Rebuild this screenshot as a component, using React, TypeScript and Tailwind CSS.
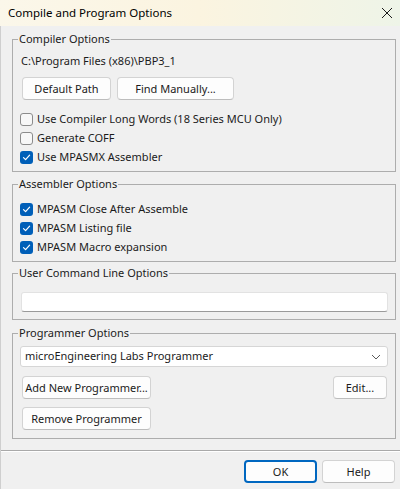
import React from 'react';

const font = { fontFamily: '"Noto Sans", sans-serif' };

function Button({ children, className = '', primary = false }: { children: React.ReactNode; className?: string; primary?: boolean }) {
  return (
    <button
      className={`h-[23px] whitespace-nowrap rounded-[4px] bg-[#fdfdfd] text-[11px] leading-none text-[#1b1b1b] ${
        primary ? 'border-2 border-[#0067c0]' : 'border border-[#d3d3d3] border-b-[#bdbdbd]'
      } ${className}`}
    >
      {children}
    </button>
  );
}

function Check({ label, checked }: { label: string; checked?: boolean }) {
  return (
    <div className="flex h-[19px] items-center">
      {checked ? (
        <span className="flex h-[13px] w-[13px] items-center justify-center rounded-[3px] bg-[#005fb8]">
          <svg width="9" height="9" viewBox="0 0 9 9" fill="none">
            <path d="M1.5 4.6 L3.6 6.7 L7.6 2.2" stroke="white" strokeWidth="1.2" strokeLinecap="round" strokeLinejoin="round" />
          </svg>
        </span>
      ) : (
        <span className="h-[13px] w-[13px] rounded-[3px] border border-[#8b8b8b] bg-[#f7f7f7]" />
      )}
      <span className="ml-[4px] text-[11px] text-[#1b1b1b]">{label}</span>
    </div>
  );
}

function Group({ title, className = '', children }: { title: string; className?: string; children: React.ReactNode }) {
  return (
    <fieldset className={`ml-[11px] mr-[4px] border border-[#adadad] px-[7px] ${className}`}>
      <legend className="-ml-[2px] px-[1px] text-[11px] leading-[16px] text-[#1b1b1b]">{title}</legend>
      {children}
    </fieldset>
  );
}

export default function App() {
  return (
    <div className="flex h-[489px] w-[400px] flex-col overflow-hidden bg-[#f0f0f0] text-[#1b1b1b]" style={font}>
      {/* Title bar */}
      <div className="flex h-[26px] shrink-0 items-center justify-between bg-linear-to-r from-[#fbf7ea] via-[#fbf4e0] to-[#eef4e8] pl-[8px] pr-[6px]">
        <span className="text-[11.5px] text-black">Compile and Program Options</span>
        <svg width="12" height="12" viewBox="0 0 12 12" className="mr-[1px]">
          <path d="M1 1 L11 11 M11 1 L1 11" stroke="#1b1b1b" strokeWidth="1" />
        </svg>
      </div>

      <div className="flex flex-1 flex-col border-l border-[#cfcfcf]">
        <Group title="Compiler Options" className="mt-[5px] pb-[4px]">
          <div className="mt-[6px] h-[16px] pl-[1px] text-[11px] leading-[16px]">C:\Program Files (x86)\PBP3_1</div>
          <div className="mt-[8px] flex gap-[6px] pl-[2px]">
            <Button className="w-[89px]">Default Path</Button>
            <Button className="w-[117px]">Find Manually...</Button>
          </div>
          <div className="mt-[10px]">
            <Check label="Use Compiler Long Words (18 Series MCU Only)" />
            <Check label="Generate COFF" />
            <Check label="Use MPASMX Assembler" checked />
          </div>
        </Group>

        <Group title="Assembler Options" className="mt-[4px] pb-[4px]">
          <div className="mt-[8px]">
            <Check label="MPASM Close After Assemble" checked />
            <Check label="MPASM Listing file" checked />
            <Check label="MPASM Macro expansion" checked />
          </div>
        </Group>

        <Group title="User Command Line Options" className="mt-[3px] pb-[7px]">
          <div className="mt-[11px] ml-[1px] h-[20px] w-[367px] rounded-[3px] border border-[#e2e2e2] border-b-[#9a9a9a] bg-white" />
        </Group>

        <Group title="Programmer Options" className="mt-[5px] pb-[8px]">
          <div className="mt-[5px] flex h-[21px] w-[368px] items-center justify-between rounded-[3px] border border-[#d6d6d6] bg-white pl-[4px] pr-[6px] text-[11px]">
            <span>microEngineering Labs Programmer</span>
            <svg width="10" height="6" viewBox="0 0 10 6" fill="none">
              <path d="M1 1 L5 5 L9 1" stroke="#5a5a5a" strokeWidth="1" />
            </svg>
          </div>
          <div className="mt-[9px] flex items-center justify-between pl-[2px] pr-[1px]">
            <Button className="w-[129px]">Add New Programmer...</Button>
            <Button className="w-[54px]">Edit...</Button>
          </div>
          <div className="mt-[6px] pl-[2px]">
            <Button className="w-[129px]">Remove Programmer</Button>
          </div>
        </Group>

        <div className="mt-[11px] h-px w-full bg-[#a9a9a9]" />
        <div className="h-px w-full bg-white" />

        <div className="mt-[8px] flex justify-end gap-[5px] pr-[5px]">
          <Button primary className="w-[73px]">OK</Button>
          <Button className="w-[73px]">Help</Button>
        </div>
      </div>
    </div>
  );
}
